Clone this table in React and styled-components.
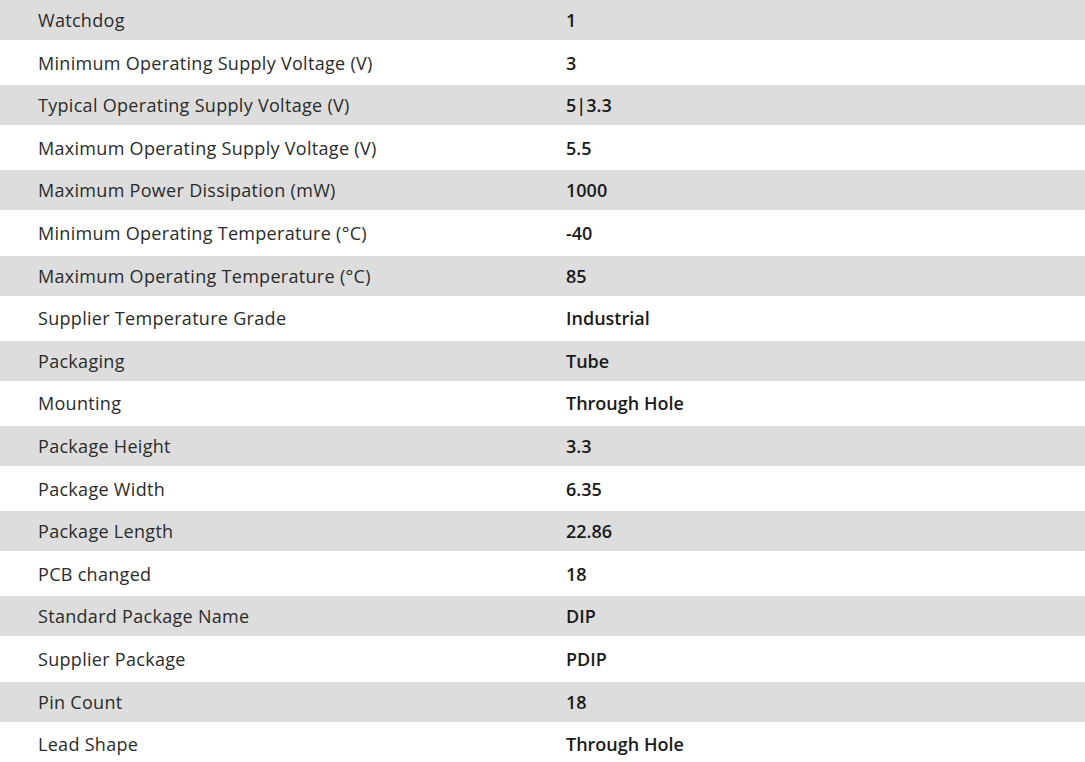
import React from "react"
import styled, { createGlobalStyle } from "styled-components"

const rows = [
  ["Watchdog", "1"],
  ["Minimum Operating Supply Voltage (V)", "3"],
  ["Typical Operating Supply Voltage (V)", "5|3.3"],
  ["Maximum Operating Supply Voltage (V)", "5.5"],
  ["Maximum Power Dissipation (mW)", "1000"],
  ["Minimum Operating Temperature (°C)", "-40"],
  ["Maximum Operating Temperature (°C)", "85"],
  ["Supplier Temperature Grade", "Industrial"],
  ["Packaging", "Tube"],
  ["Mounting", "Through Hole"],
  ["Package Height", "3.3"],
  ["Package Width", "6.35"],
  ["Package Length", "22.86"],
  ["PCB changed", "18"],
  ["Standard Package Name", "DIP"],
  ["Supplier Package", "PDIP"],
  ["Pin Count", "18"],
  ["Lead Shape", "Through Hole"],
]

const GlobalStyle = createGlobalStyle`
  body {
    margin: 0;
    background: #fff;
    font-family: "Open Sans", "Noto Sans", sans-serif;
  }
`

function App() {
  return (
    <>
      <GlobalStyle />
      <SpecTable>
        {rows.map(([label, value], i) => (
          <Row key={label} striped={i % 2 === 0}>
            <Label>{label}</Label>
            <Value>{value}</Value>
          </Row>
        ))}
      </SpecTable>
    </>
  )
}

export default App

const SpecTable = styled.div`
  display: flex;
  flex-direction: column;
  gap: 2.6px;
  width: 1085px;
`

const Row = styled.div.withConfig({ shouldForwardProp: p => p !== "striped" })`
  display: grid;
  grid-template-columns: 566px 1fr;
  align-items: center;
  height: 40px;
  background: ${p => (p.striped ? "#dddddd" : "#ffffff")};
`

const Label = styled.div`
  padding-left: 38px;
  font-size: 18px;
  letter-spacing: 0.3px;
  color: #2b2b2b;
`

const Value = styled.div`
  font-size: 18px;
  font-weight: 600;
  color: #1a1a1a;
`
